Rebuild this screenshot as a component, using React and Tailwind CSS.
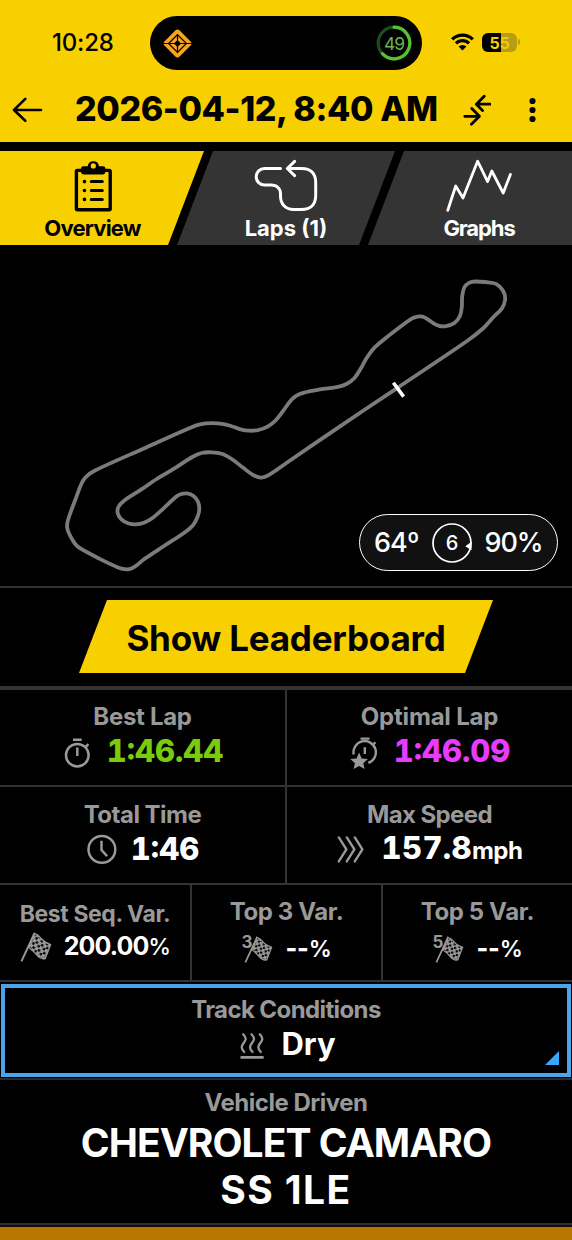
import { clsx } from 'clsx'

// Circuit outline, listed clockwise from the start line
const trackPoints = [
    [396, 388.8], [340, 426.3], [290, 460.5], [277, 469.6], [268, 475.5], [260.7, 477.6], [252.5, 474.6], [243, 467.6],
    [231.7, 459], [222.5, 454], [211.7, 452.3], [201.5, 453], [192.3, 457], [174, 468.7], [156.7, 479], [141, 489.7],
    [124, 500.8], [118.4, 507], [117.8, 513.5], [121.7, 519.6], [128, 523.2], [135.7, 524.3], [144, 522.7], [152.5, 518],
    [163.3, 508.6], [175.5, 497.2], [180.5, 494.3], [187, 493.4], [193.5, 496], [198, 501.7], [199.3, 509.5], [197.5, 517],
    [193, 525.2], [185, 532.2], [164, 546], [144, 559.3], [137.5, 564.8], [132.5, 567.9], [126.7, 569.3], [118, 567.4],
    [98, 558], [80, 548.2], [75, 543.7], [70.3, 536], [67.2, 528], [68, 520], [76.5, 496.7], [81.5, 483.5], [86, 476.8],
    [95, 470.5], [143.3, 448.7], [191, 427.5], [201, 424.2], [211.7, 423.2], [222, 423.9], [231, 426], [240.5, 429.3],
    [249.3, 430.7], [258.5, 430], [268, 426.3], [275.5, 420.5], [283.5, 410.3], [291, 400.2], [296.5, 395.7], [303.3, 392.8],
    [320, 389.4], [338, 386.9], [346.5, 384], [354.5, 378], [360.5, 369], [366.5, 358.3], [373.5, 348.7], [383.3, 340],
    [407, 321.8], [413, 318], [419.5, 316.4], [425, 317.6], [433.5, 323.3], [439, 325.8], [446, 326.1], [454.5, 323],
    [460, 315.8], [461.8, 307], [462.2, 296], [464.3, 287.5], [469, 282.9], [475.5, 281.5], [493, 283], [499.5, 286.3],
    [504.3, 293.5], [505, 300.5], [502, 308.3], [493.5, 317], [483.5, 328], [466.7, 341.3]
]

function smoothPath(pts) {
    const n = pts.length
    let d = `M${pts[0][0]} ${pts[0][1]}`
    for (let i = 0; i < n; i++) {
        const p0 = pts[(i - 1 + n) % n]
        const p1 = pts[i]
        const p2 = pts[(i + 1) % n]
        const p3 = pts[(i + 2) % n]
        const len = Math.hypot(p2[0] - p1[0], p2[1] - p1[1]) / 3
        const t1 = Math.hypot(p2[0] - p0[0], p2[1] - p0[1])
        const t2 = Math.hypot(p3[0] - p1[0], p3[1] - p1[1])
        const c1 = [p1[0] + ((p2[0] - p0[0]) / t1) * len, p1[1] + ((p2[1] - p0[1]) / t1) * len]
        const c2 = [p2[0] - ((p3[0] - p1[0]) / t2) * len, p2[1] - ((p3[1] - p1[1]) / t2) * len]
        d += `C${c1.map(v => v.toFixed(2)).join(' ')} ${c2.map(v => v.toFixed(2)).join(' ')} ${p2.join(' ')}`
    }
    return d + 'Z'
}

const StatusBar = () => (
    <div className="flex h-[70px] pt-[16px]">
        <span className="ml-[52px] w-[98px] text-[24px] leading-[53px] font-medium tracking-[-0.2px]">10:28</span>
        <div className="flex h-[54px] w-[272px] items-center justify-between rounded-full bg-black pr-[10px] pl-[12px]">
            <svg className="size-[31px]" viewBox="-15.5 -15.5 31 31">
                <path d="M-13.6 -1.4L-2.2 -13Q0 -14.9 2.2 -13L13.6 -1.4Q14.6 0 13.6 1.4L2.2 13Q0 14.9 -2.2 13L-13.6 1.4Q-14.6 0 -13.6 -1.4Z" fill="#f7a51e" />
                <path d="M0 -9.8L9.8 0L0 9.8L-9.8 0Z" fill="black" />
                <path d="M0 -8L8 0L0 8L-8 0Z" fill="#f7a51e" />
                <path d="M0 -3.6L3.6 0L0 3.6L-3.6 0Z" fill="black" />
                <path d="M-15 0H15M0 -9V9" stroke="black" strokeWidth="1.2" />
            </svg>
            <div className="relative flex size-[36px] items-center justify-center">
                <svg className="absolute inset-0" viewBox="-18 -18 36 36" fill="none" strokeWidth="3.2">
                    <circle r="15.8" stroke="#1f4a20" />
                    <path d="M0 -15.8A15.8 15.8 0 1 1 -11.6 10.7" stroke="#55c234" strokeLinecap="round" />
                </svg>
                <span className="mt-px text-[17.5px] leading-[20px] font-normal tracking-[-1.1px] text-[#6cb552]">49</span>
            </div>
        </div>
        <svg className="mt-[17px] ml-[29px] h-[18px] w-[23px]" viewBox="0 0 23 18" fill="none" stroke="black">
            <path d="M1.2 6.4A14.6 14.6 0 0 1 21.8 6.4" strokeWidth="3.4" />
            <path d="M5 10.3A9.2 9.2 0 0 1 18 10.3" strokeWidth="3.2" />
            <path d="M11.5 17.6L7.6 13.6A5.4 5.4 0 0 1 15.4 13.6Z" fill="black" stroke="none" />
        </svg>
        <div className="mt-[17px] ml-[8px] flex h-[19px] w-[35px] items-center justify-center rounded-[6px] bg-linear-to-r from-black from-54% to-[#b89c12] to-54% text-[16px] font-bold tracking-[-0.2px]">
            <span className="text-[#f8d000]">5</span>
            <span className="text-[#f0cb0c]">5</span>
        </div>
        <div className="mt-[23px] ml-[1px] h-[6px] w-[2px] rounded-r-full bg-[#b89c12]"></div>
    </div>
)

const TitleBar = () => (
    <div className="flex h-[72px] items-center">
        <svg className="mt-[7px] ml-[12px] h-[28px] w-[31px]" viewBox="12 96 31 28" fill="none" stroke="black" strokeWidth="2.6" strokeLinecap="round" strokeLinejoin="round">
            <path d="M41 110H14.5M25.3 98.8L14 110L25.3 120.8" />
        </svg>
        <h1 className="mt-[6px] ml-[32px] w-[365px] text-[34px] leading-[40px] font-extrabold tracking-[-0.4px] whitespace-nowrap">2026-04-12, 8:40 AM</h1>
        <svg className="mt-[8px] ml-[23px] h-[32px] w-[28px]" viewBox="463 94 28 32" fill="none" stroke="black" strokeWidth="2.8" strokeLinecap="round" strokeLinejoin="round">
            <path d="M490 104.2H477M484.2 96.3L476.4 104.2L482.6 110.6" />
            <path d="M464.8 116.3H479M471.8 108.6L479.4 116.3L471.4 124.3" />
        </svg>
        <svg className="mt-[8px] ml-[36px] h-[26px] w-[11px]" viewBox="-5.5 -13 11 26">
            <circle cy="-9" r="3.1" />
            <circle r="3.1" />
            <circle cy="9" r="3.1" />
        </svg>
    </div>
)

const ClipboardIcon = () => (
    <svg className="h-[54px] w-[66px]" viewBox="60 159 66 54" fill="none" stroke="black" strokeLinecap="round">
        <rect x="76.4" y="170.4" width="33.8" height="39.3" rx="1" strokeWidth="3.4" />
        <path d="M81 168.5Q81 166.3 83.5 166.3H87.7A5.7 5.7 0 0 1 99 166.3H103Q105.4 166.3 105.4 168.5V171.6Q105.4 174.6 102.4 174.6H84Q81 174.6 81 171.6Z" fill="black" stroke="none" />
        <circle cx="93.3" cy="165.9" r="2.6" fill="#f8d000" stroke="none" />
        <path d="M84.4 181.6h.1M84.4 190.5h.1M84.4 199.4h.1" strokeWidth="3.6" />
        <path d="M91.3 181.6H102.3M91.3 190.5H102.3M91.3 199.4H102.3" strokeWidth="3" />
    </svg>
)

const LapsIcon = () => (
    <svg className="h-[54px] w-[66px]" viewBox="253 159 66 54" fill="none" stroke="white" strokeWidth="3" strokeLinecap="round" strokeLinejoin="round">
        <path d="M280.5 168.5H264.5a8.3 8.3 0 0 0 0 16.6h6.5c6 0 9.5 3.5 9.5 9v2c0 8 5 13.4 13 13.4h8c9 0 14.2-5 14.2-14v-13c0-9-5-14-14-14H288" />
        <path d="M294.6 161.4L287.3 168.5L294.6 175.6" />
    </svg>
)

const GraphIcon = () => (
    <svg className="h-[54px] w-[66px]" viewBox="446 159 66 54" fill="none" stroke="white" strokeWidth="2.8" strokeLinecap="round" strokeLinejoin="round">
        <path d="M447.8 210.3L455.7 186L463 198L477.6 161.2L487.6 181.6L491.8 171L503.2 193L510.4 174.4" />
    </svg>
)

const Tabs = () => (
    <nav className="mt-[9px] flex h-[94px] text-[22px] font-bold text-white">
        <div className="flex w-[204px] flex-col items-center bg-[#f8d000] pt-[8px] pr-[19px] text-black [clip-path:polygon(0_0,204px_0,168px_100%,0_100%)]">
            <ClipboardIcon />
            <span className="leading-[30px] tracking-[-0.8px]">Overview</span>
        </div>
        <div className="ml-[-27px] flex w-[218px] flex-col items-center bg-[#343434] pt-[8px] [clip-path:polygon(36px_0,218px_0,182px_100%,0_100%)]">
            <LapsIcon />
            <span className="leading-[30px]">Laps (1)</span>
        </div>
        <div className="ml-[-27px] flex w-[204px] flex-col items-center bg-[#343434] pt-[8px] pl-[18px] [clip-path:polygon(36px_0,204px_0,204px_100%,0_100%)]">
            <GraphIcon />
            <span className="leading-[30px] tracking-[-1.1px]">Graphs</span>
        </div>
    </nav>
)

const TrackMap = () => (
    <section className="relative h-[343px] border-b-2 border-[#333]">
        <svg className="h-[341px] w-[572px]" viewBox="0 245 572 341" fill="none">
            <path d={smoothPath(trackPoints)} stroke="#7b7b7b" strokeWidth="3.8" strokeLinejoin="round" />
            <path d="M393.4 382.8L403.6 396.6" stroke="white" strokeWidth="3.6" />
        </svg>
        <div className="absolute right-[14px] bottom-[15px] flex h-[57px] w-[199px] items-center rounded-full border-[1.5px] border-white bg-[#111] pl-[14px] text-[27px] leading-[54px] font-medium text-white">
            <span className="w-[58px] tracking-[-0.9px]">64º</span>
            <div className="relative flex size-[40px] items-center justify-center text-[20px]">
                <svg className="absolute inset-0" viewBox="-20 -20 40 40" fill="none">
                    <circle r="19" stroke="white" strokeWidth="1.7" />
                    <path d="M13.3 3.2L19.5 -1.2V7.2Z" fill="white" />
                </svg>
                6
            </div>
            <span className="ml-[12.5px] tracking-[-1.1px]">90%</span>
        </div>
    </section>
)

const StopwatchIcon = () => (
    <svg className="h-[36px] w-[32px]" viewBox="61 733 32 36" fill="none" stroke="#999" strokeWidth="2.5">
        <circle cx="76.3" cy="755.2" r="11.3" />
        <path d="M72 739.7H80.7M76.3 747.6V756M84.6 747L87.4 744.2" />
    </svg>
)

const OptimalIcon = () => (
    <svg className="h-[36px] w-[32px]" viewBox="348.5 733 32 36" fill="none" stroke="#999" strokeWidth="2.4">
        <path d="M353.2 754.5A11.2 11.2 0 1 1 367.8 762.9" />
        <path d="M360 738.6H369M364.3 747.2V754M372.2 744.6L375 742.4" />
        <path d="M358.6 752.6L361.2 758.4L367.4 759.1L362.8 763.2L364.1 769L358.6 766L353.1 769L354.4 763.2L349.8 759.1L356 758.4Z" fill="#999" stroke="none" />
    </svg>
)

const ClockIcon = () => (
    <svg className="h-[36px] w-[32px]" viewBox="85.5 832 32 36" fill="none" stroke="#999" strokeWidth="2.5">
        <circle cx="101.4" cy="850.4" r="13.4" />
        <path d="M101 841.7V851L106.6 857.2" />
    </svg>
)

const SpeedIcon = () => (
    <svg className="h-[36px] w-[32px]" viewBox="339 832 32 36" fill="none" stroke="#999" strokeWidth="2.4" strokeLinecap="round" strokeLinejoin="round">
        <path d="M340.8 838.4L348.4 850.4L340.8 862.4M348.8 838.4L356.4 850.4L348.8 862.4M356.8 838.4L364.4 850.4L356.8 862.4" />
    </svg>
)

const FlagIcon = ({ id, className }) => (
    <svg className={className} viewBox="20 932 32 30" fill="none" stroke="#999">
        <defs>
            <pattern id={id} width="6" height="6" patternUnits="userSpaceOnUse" patternTransform="translate(33 935) rotate(28) skewX(-4)">
                <rect width="3.1" height="3.1" fill="#999" />
                <rect x="3" y="3" width="3.1" height="3.1" fill="#999" />
            </pattern>
        </defs>
        <path d="M34.3 933.4Q37.5 934 40.6 938T50.6 944.6L45.2 958.6Q40.5 959.5 37 955.2T28.8 947.4Z" fill={`url(#${id})`} strokeWidth="1.3" />
        <path d="M34.6 933L21.4 961.4" strokeWidth="1.9" />
    </svg>
)

const HeatIcon = () => (
    <svg className="h-[36px] w-[32px]" viewBox="237 1026 32 36" fill="none" stroke="#999" strokeWidth="2.3" strokeLinecap="round">
        <path d="M244.2 1034.2C248.6 1038.6 246.4 1040.6 244.6 1043C242.4 1046 241.6 1048.2 245.2 1052" />
        <path d="M252.5 1034.2C256.9 1038.6 254.7 1040.6 252.9 1043C250.7 1046 249.9 1048.2 253.5 1052" />
        <path d="M260.8 1034.2C265.2 1038.6 263 1040.6 261.2 1043C259 1046 258.2 1048.2 261.8 1052" />
        <path d="M242.6 1057.4H263.6" strokeWidth="2.6" />
    </svg>
)

const Stat = ({ label, labelClass, icon, className, children }) => (
    <div className={clsx('flex flex-col items-center border-[#333]', className)}>
        <span className={clsx('text-[24px] leading-[32px] font-bold text-[#999]', labelClass)}>{label}</span>
        <div className="flex h-[36px] items-center gap-[13px] text-[31px] leading-[36px] font-extrabold text-white">
            {icon}
            {children}
        </div>
    </div>
)

const TopStat = ({ count, className }) => (
    <div className={clsx('flex flex-col items-center border-[#333] pt-[11px]', className)}>
        <span className="text-[24px] leading-[32px] font-bold tracking-[-0.4px] text-[#999]">Top {count} Var.</span>
        <div className="flex h-[42px] items-center gap-[12px] text-[25px] font-extrabold text-white">
            <div className="relative h-[28px] w-[32px]">
                <FlagIcon id={`check-${count}`} className="absolute top-[1px] left-[3px] h-[27px] w-[29px]" />
                <span className="absolute top-0 left-0 text-[17px] leading-[14px] font-bold text-[#999]">{count}</span>
            </div>
            <span className="tracking-[-0.2px]">--<span className="text-[23px] font-semibold">%</span></span>
        </div>
    </div>
)

export default function App() {
    return (
        <div className="flex h-[1240px] w-[572px] flex-col overflow-hidden bg-black font-[Inter,sans-serif]">
            <header className="h-[142px] shrink-0 bg-[#f8d000] text-black">
                <StatusBar />
                <TitleBar />
            </header>

            <Tabs />
            <TrackMap />

            <section className="flex h-[102px] justify-center border-b-4 border-[#333] pt-[12px]">
                <button className="h-[73px] w-[414px] bg-[#f8d000] text-[35px] leading-[76px] font-bold tracking-[-0.2px] text-black [clip-path:polygon(28px_0,100%_0,386px_100%,0_100%)]">
                    Show Leaderboard
                </button>
            </section>

            <section className="grid grid-cols-[287px_1fr]">
                <Stat label="Best Lap" labelClass="tracking-[-0.3px]" icon={<StopwatchIcon />} className="h-[97px] border-r-2 border-b-2 pt-[11px]">
                    <span className="text-[#7acb0c] tabular-nums">1:46.44</span>
                </Stat>
                <Stat label="Optimal Lap" labelClass="tracking-[-0.2px]" icon={<OptimalIcon />} className="h-[97px] border-b-2 pt-[11px]">
                    <span className="text-[#e93bff] tabular-nums">1:46.09</span>
                </Stat>
                <Stat label="Total Time" labelClass="tracking-[-0.5px]" icon={<ClockIcon />} className="h-[98px] border-r-2 border-b-2 pt-[12px]">
                    <span className="tabular-nums">1:46</span>
                </Stat>
                <Stat label="Max Speed" labelClass="tracking-[-0.6px]" icon={<SpeedIcon />} className="h-[98px] border-b-2 pt-[12px]">
                    <span className="tracking-[0.4px] tabular-nums">157.8<span className="text-[24px] font-bold tracking-[-0.5px]">mph</span></span>
                </Stat>
            </section>

            <section className="grid grid-cols-[192px_191px_1fr]">
                <div className="flex h-[97px] flex-col items-center border-r-2 border-b-2 border-[#333] pt-[13px]">
                    <span className="text-[23px] leading-[32px] font-bold tracking-[-0.4px] text-[#999]">Best Seq. Var.</span>
                    <div className="flex h-[34px] items-center gap-[12px] text-[25px] font-bold text-white">
                        <FlagIcon id="check-seq" className="h-[30px] w-[32px]" />
                        <span className="tracking-[-0.9px]">200.00<span className="text-[23px] font-medium">%</span></span>
                    </div>
                </div>
                <TopStat count={3} className="h-[97px] border-r-2 border-b-2" />
                <TopStat count={5} className="h-[97px] border-b-2" />
            </section>

            <section className="h-[98px] border-b-2 border-[#2a2a2a] px-[1px] pt-[2px]">
                <div className="relative flex h-[93px] flex-col items-center border-4 border-[#4aa4ec] pt-[6px]">
                    <span className="text-[24px] leading-[32px] font-bold tracking-[-0.6px] text-[#999]">Track Conditions</span>
                    <div className="flex h-[36px] items-center gap-[13px] text-[31px] font-bold text-white">
                        <HeatIcon />
                        Dry
                    </div>
                    <div className="absolute right-[8px] bottom-[8px] size-[14px] bg-[#38a7ff] [clip-path:polygon(100%_0,100%_100%,0_100%)]"></div>
                </div>
            </section>

            <section className="flex h-[145px] flex-col items-center border-b-2 border-[#2e2e30] pt-[7px]">
                <span className="text-[24px] leading-[32px] font-bold tracking-[-0.5px] text-[#999]">Vehicle Driven</span>
                <h2 className="w-[440px] text-center text-[39px] leading-[47px] font-bold tracking-[-0.95px] text-white">
                    CHEVROLET CAMARO <span className="tracking-[1.4px]">SS 1LE</span>
                </h2>
            </section>
            <footer className="flex-1 border-t-2 border-[#1c0c04] bg-[#b87800]"></footer>
        </div>
    )
}
